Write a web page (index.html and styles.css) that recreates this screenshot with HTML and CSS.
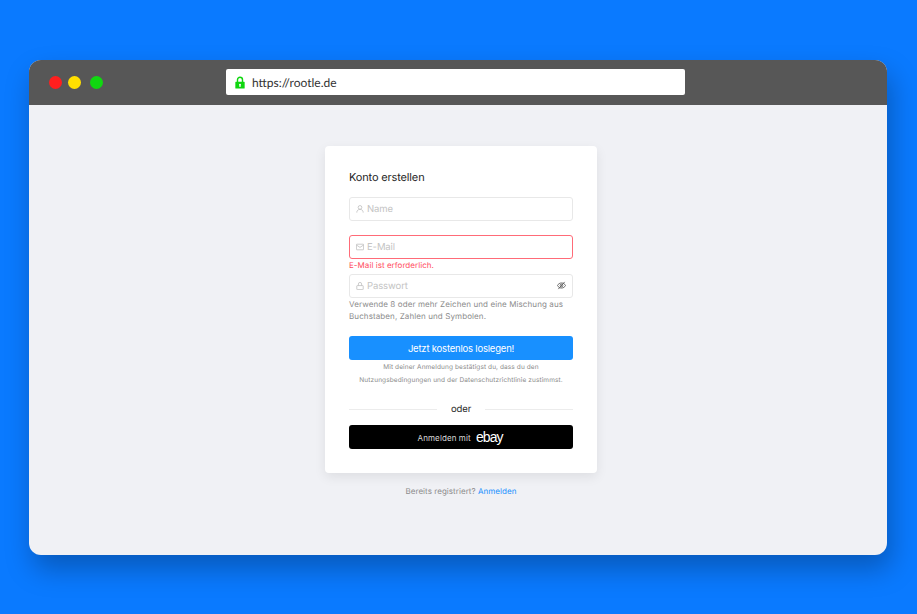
FILE: index.html
```html
<!DOCTYPE html>
<html lang="de">
<head>
    <meta charset="UTF-8">
    <meta name="viewport" content="width=device-width, initial-scale=1.0">
    <title>Konto erstellen</title>
    <link rel="stylesheet" href="styles.css">
</head>
<body>
    <div class="window">
        <!-- Browser-Leiste -->
        <div class="titlebar">
            <div class="dots">
                <span class="dot dot-red"></span>
                <span class="dot dot-yellow"></span>
                <span class="dot dot-green"></span>
            </div>
            <div class="urlbar">
                <svg class="lock" width="10" height="13" viewBox="0 0 12 15">
                    <path d="M3 7V4.200a3 3 0 0 1 6 0V7" fill="none" stroke="#0fd60f" stroke-width="1.7"/>
                    <path fill-rule="evenodd" d="M1 6.500h10a.6.6 0 0 1 .6.6v7a.6.6 0 0 1-.6.6H1a.6.6 0 0 1-.6-.6v-7a.6.6 0 0 1 .6-.6zM6 9a1.200 1.200 0 0 0-.7 2.200V13h1.400v-1.800A1.200 1.200 0 0 0 6 9z" fill="#0fd60f"/>
                </svg>
                <span>https://rootle.de</span>
            </div>
        </div>

        <div class="content">
            <div class="card">
                <h1>Konto erstellen</h1>

                <div class="field">
                    <svg class="icon" width="8" height="8" viewBox="0 0 10 10">
                        <circle cx="5" cy="3" r="2.300"/>
                        <path d="M1 9.500c0-2.500 1.500-4 4-4s4 1.500 4 4"/>
                    </svg>
                    <span class="placeholder">Name</span>
                </div>

                <div class="field field-error">
                    <svg class="icon" width="8" height="8" viewBox="0 0 10 10">
                        <rect x="0.500" y="1.500" width="9" height="7" rx="0.600"/>
                        <path d="M0.500 2.500L5 5.500l4.500-3"/>
                    </svg>
                    <span class="placeholder">E-Mail</span>
                </div>
                <p class="error">E-Mail ist erforderlich.</p>

                <div class="field field-password">
                    <svg class="icon" width="8" height="8" viewBox="0 0 10 10">
                        <rect x="1" y="4.500" width="8" height="5" rx="0.600"/>
                        <path d="M3 4.500V2.500a2 2 0 0 1 4 0v2"/>
                    </svg>
                    <span class="placeholder">Passwort</span>
                    <svg class="eye" width="9" height="9" viewBox="0 0 10 10">
                        <path d="M0.500 5C1.500 3.200 3 2.200 5 2.200S8.500 3.200 9.500 5C8.500 6.800 7 7.800 5 7.800S1.500 6.800 0.500 5z"/>
                        <circle cx="5" cy="5" r="1.500"/>
                        <path d="M8.500 1L1.500 9"/>
                    </svg>
                </div>
                <p class="hint">Verwende 8 oder mehr Zeichen und eine Mischung aus Buchstaben, Zahlen und Symbolen.</p>

                <button class="btn btn-primary">Jetzt kostenlos loslegen!</button>
                <p class="terms">Mit deiner Anmeldung bestätigst du, dass du den<br>Nutzungsbedingungen und der Datenschutzrichtlinie zustimmst.</p>

                <div class="divider"><span>oder</span></div>

                <button class="btn btn-ebay">Anmelden mit <span class="ebay">ebay</span></button>
            </div>

            <p class="login">Bereits registriert? <a href="#">Anmelden</a></p>
        </div>
    </div>
</body>
</html>
```

FILE: styles.css
```css
body {
    font-family: Inter, "Noto Sans", sans-serif;
    text-rendering: geometricPrecision;
    background-color: #0a7aff;
    margin: 0;
    padding: 60px 30px 59px 29px;
    height: 614px;
    box-sizing: border-box;
    overflow: hidden;
}

.window {
    height: 495px;
    border-radius: 12px;
    overflow: hidden;
    background-color: #f0f1f5;
    box-shadow: 4px 14px 28px rgba(0, 0, 0, 0.27);
}

.titlebar {
    height: 45px;
    background-color: #575757;
    display: flex;
    align-items: center;
    padding: 0 0 0 20px;
    box-sizing: border-box;
}

.dots {
    display: flex;
    gap: 6px;
    width: 177px;
}

.dot {
    width: 13px;
    height: 13px;
    border-radius: 50%;
}

.dot-red {
    background-color: #ff1f1f;
}

.dot-yellow {
    background-color: #ffdf00;
}

.dot-green {
    background-color: #10d810;
    margin-left: 3px;
}

.urlbar {
    width: 459px;
    height: 26px;
    margin-bottom: 1px;
    background-color: #fff;
    border-radius: 2px;
    display: flex;
    align-items: center;
    gap: 7px;
    padding-left: 9px;
    box-sizing: border-box;
    font-family: Lato, sans-serif;
    font-size: 12px;
    color: #333;
}

.content {
    display: flex;
    flex-direction: column;
    align-items: center;
    padding: 41px 0 0 6px;
}

.card {
    width: 272px;
    height: 327px;
    background-color: #fff;
    border-radius: 4px;
    padding: 24px;
    box-sizing: border-box;
    box-shadow: 0 4px 12px rgba(0, 0, 0, 0.08);
}

h1 {
    font-size: 11px;
    letter-spacing: -0.15px;
    line-height: 15px;
    font-weight: 400;
    margin: 0 0 12px;
    color: #262626;
}

.field {
    height: 24px;
    border: 1px solid #e8e8e8;
    border-radius: 3px;
    display: flex;
    align-items: center;
    gap: 3px;
    padding: 0 6px;
    box-sizing: border-box;
    margin-bottom: 14px;
}

.field-error {
    border-color: #ff6b78;
    margin-bottom: 0;
}

.field-password {
    margin-bottom: 0;
}

.icon {
    fill: none;
    stroke: #bfbfbf;
    stroke-width: 1;
    margin-top: -1px;
}

.eye {
    fill: none;
    stroke: #595959;
    stroke-width: 1;
    margin-left: auto;
    margin-top: -1px;
}

.placeholder {
    font-size: 9.500px;
    letter-spacing: -0.1px;
    line-height: 12px;
    padding-top: 1px;
    color: #c4c4c4;
}

.error {
    font-size: 8px;
    letter-spacing: 0.05px;
    line-height: 13px;
    margin: 0 0 2px;
    color: #ff4d5e;
}

.hint {
    font-size: 8px;
    letter-spacing: 0.1px;
    line-height: 12px;
    margin: 0 0 14px;
    color: #8c8c8c;
}

.btn {
    display: block;
    width: 100%;
    height: 24px;
    border: none;
    border-radius: 3px;
    color: #fff;
    font-family: inherit;
    padding: 0;
}

.btn-primary {
    background-color: #1890ff;
    font-size: 9.500px;
    letter-spacing: -0.2px;
}

.terms {
    font-size: 6.500px;
    letter-spacing: 0.1px;
    line-height: 13px;
    margin: 0 0 15px;
    padding-top: 1px;
    text-align: center;
    color: #8c8c8c;
}

.divider {
    display: flex;
    align-items: center;
    gap: 14px;
    font-size: 9.500px;
    letter-spacing: -0.1px;
    line-height: 13px;
    color: #262626;
    margin-bottom: 9px;
}

.divider span {
    padding-top: 1px;
}

.divider::before,
.divider::after {
    content: "";
    flex: 1;
    height: 1px;
    background-color: #ececec;
}

.btn-ebay {
    background-color: #000;
    font-size: 8px;
    letter-spacing: 0.1px;
    color: #d9d9d9;
    padding-right: 2px;
}

.ebay {
    font-family: "Liberation Sans", sans-serif;
    font-size: 14px;
    letter-spacing: -1px;
    color: #fff;
    margin-left: 3px;
    vertical-align: -1px;
}

.login {
    font-size: 8px;
    letter-spacing: 0.05px;
    color: #8c8c8c;
    margin: 13px 0 0;
}

a {
    color: #1890ff;
    text-decoration: none;
}
```
